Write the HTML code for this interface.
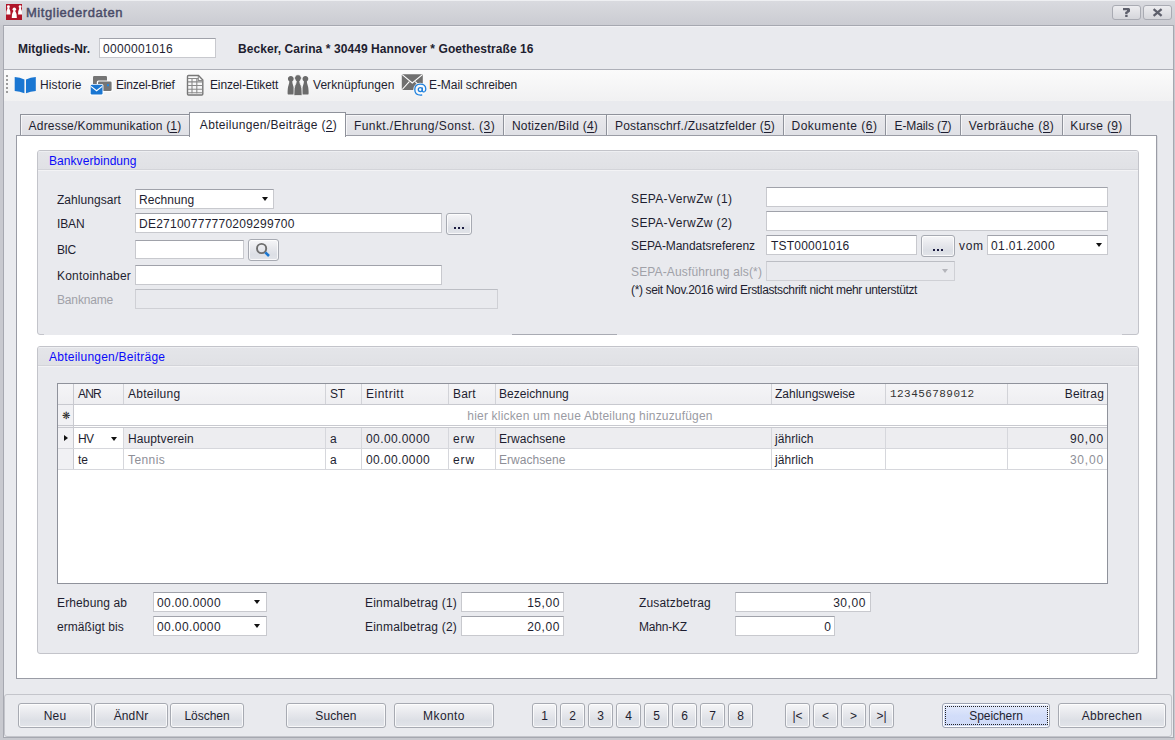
<!DOCTYPE html><html><head><meta charset="utf-8"><style>
html,body{margin:0;padding:0}
body{width:1175px;height:740px;overflow:hidden;position:relative;background:#c8c9cf;font-family:'Liberation Sans',sans-serif;font-size:12px;color:#1e1e30}
body>div,body>svg{position:absolute;box-sizing:content-box}
.t{white-space:nowrap;line-height:14px}
.btn{border:1px solid #a7aab2;border-radius:3px;background:linear-gradient(#f6f6f8 0%,#e9eaee 35%,#dcdfe5 72%,#e2e4e9 100%);box-shadow:inset 0 0 0 1px rgba(255,255,255,0.75)}
u{text-decoration:none;border-bottom:1px solid currentColor;display:inline-block;line-height:11px}
</style></head><body>
<div style="left:0px;top:0px;width:1175px;height:25px;background:linear-gradient(#eeeff2 0px,#eeeff2 1px,#d9dadf 1px,#cbccd2 25px)"></div>
<svg style="left:6px;top:4px" width="16" height="16" viewBox="0 0 16 16"><rect width="16" height="16" fill="#b0162a"/><g fill="#fff"><circle cx="2.4" cy="2.65" r="1.45"/><path d="M1.5 3.4999999999999996 L3.3 3.4999999999999996 Q3.2 4.8999999999999995 3.786 5.699999999999999 Q4.5 6.699999999999999 4.5 10.0 L4.5 10.6 L0.2999999999999998 10.6 L0.2999999999999998 10.0 Q0.2999999999999998 6.699999999999999 1.0139999999999998 5.699999999999999 Q1.5999999999999999 4.8999999999999995 1.5 3.4999999999999996 Z"/><circle cx="14.1" cy="2.65" r="1.45"/><path d="M13.2 3.4999999999999996 L15.0 3.4999999999999996 Q14.9 4.8999999999999995 15.42 5.699999999999999 Q16.1 6.699999999999999 16.1 10.0 L16.1 10.6 L12.1 10.6 L12.1 10.0 Q12.1 6.699999999999999 12.78 5.699999999999999 Q13.299999999999999 4.8999999999999995 13.2 3.4999999999999996 Z"/></g><g fill="#fff"><circle cx="8.3" cy="5.15" r="1.75"/><path d="M7.4 6.300000000000001 L9.200000000000001 6.300000000000001 Q9.100000000000001 7.7 9.950000000000001 8.5 Q10.8 9.5 10.8 13.3 L10.8 13.9 L5.800000000000001 13.9 L5.800000000000001 13.3 Q5.800000000000001 9.5 6.65 8.5 Q7.500000000000001 7.7 7.4 6.300000000000001 Z"/></g></svg>
<div class="t" style="left:26px;top:6px;font-size:13px;font-weight:normal;font-family:'Liberation Sans',sans-serif;color:#4a4c68;-webkit-text-stroke:0.45px #4a4c68;letter-spacing:0.536px;">Mitgliederdaten</div>
<div style="left:1112px;top:5px;width:27px;height:13px;border:1px solid #a9abb3;border-radius:3px;background:linear-gradient(#ededf0,#d5d6db)"></div>
<div style="left:1143px;top:5px;width:27px;height:13px;border:1px solid #a9abb3;border-radius:3px;background:linear-gradient(#ededf0,#d5d6db)"></div>
<svg style="left:1112px;top:5px" width="60" height="15" viewBox="1112 5 60 15"><g fill="#5d5f6b"><path d="M1123 8 H1129 L1130 9 V11.6 L1128.6 12.8 H1127.6 V14.2 H1125.2 V12 L1127 11 V10.2 H1123 Z"/><rect x="1125.2" y="15" width="2.4" height="2"/></g><path d="M1153.6 9.2 L1161.6 15.8 M1161.6 9.2 L1153.6 15.8" stroke="#5d5f6b" stroke-width="2.3"/></svg>
<div style="left:3px;top:25px;width:1171px;height:713px;background:#e9eaee;border:1px solid #a6a8b0;box-sizing:border-box"></div>
<div style="left:4px;top:26px;width:1168px;height:1px;background:#f2f2f5"></div>
<div style="left:4px;top:69px;width:1169px;height:1px;background:#aeb0b8"></div>
<div style="left:4px;top:70px;width:1169px;height:31px;background:linear-gradient(#fbfbfb,#f1f1f2)"></div>
<div style="left:6px;top:75px;width:2px;height:2px;background:#9c9c9c"></div>
<div style="left:6px;top:79px;width:2px;height:2px;background:#9c9c9c"></div>
<div style="left:6px;top:83px;width:2px;height:2px;background:#9c9c9c"></div>
<div style="left:6px;top:87px;width:2px;height:2px;background:#9c9c9c"></div>
<div style="left:6px;top:91px;width:2px;height:2px;background:#9c9c9c"></div>
<div class="t" style="left:18px;top:42px;font-size:12px;font-weight:bold;font-family:'Liberation Sans',sans-serif;color:#1e1e30;letter-spacing:0.015px;">Mitglieds-Nr.</div>
<div style="left:99px;top:38px;width:115px;height:18px;background:#fff;border:1px solid #c8c9ce;border-top-color:#a0a2aa;"></div>
<div class="t" style="left:103px;top:42px;font-size:12px;font-weight:normal;font-family:'Liberation Sans',sans-serif;color:#1e1e30;letter-spacing:0.339px;">0000001016</div>
<div class="t" style="left:238px;top:42px;font-size:12px;font-weight:bold;font-family:'Liberation Sans',sans-serif;color:#1e1e30;letter-spacing:0.07px;">Becker, Carina * 30449 Hannover * Goethestraße 16</div>
<svg style="left:14px;top:76px" width="23" height="18" viewBox="14 76 23 18"><g fill="#1976d2"><path d="M14.7 77 Q20 77.3 24.4 79.5 L24.4 93.2 Q20 91.5 14.7 91 Z"/><path d="M35.8 77 Q30.5 77.3 26 79.5 L26 93.2 Q30.5 91.5 35.8 91 Z"/></g></svg>
<div class="t" style="left:40px;top:78px;font-size:12px;font-weight:normal;font-family:'Liberation Sans',sans-serif;color:#1e1e30;letter-spacing:0.102px;">Historie</div>
<svg style="left:88px;top:74px" width="26" height="22" viewBox="88 74 26 22"><rect x="93" y="76" width="14" height="9" rx="1.2" fill="#757575"/><rect x="96.8" y="80.5" width="15.8" height="11.3" rx="1.5" fill="#fff"/><rect x="98" y="81.5" width="13.6" height="9.4" rx="1.2" fill="#757575"/><rect x="107" y="84.2" width="2" height="2" fill="#1e88e5"/><rect x="89.8" y="84" width="13.6" height="11.4" rx="1.5" fill="#fff"/><rect x="90.7" y="84.8" width="11.8" height="9.7" rx="1.2" fill="#1976d2"/><path d="M91 86.4 L96.6 90.8 L102.2 86.4" stroke="#fff" stroke-width="1.2" fill="none"/></svg>
<div class="t" style="left:116px;top:78px;font-size:12px;font-weight:normal;font-family:'Liberation Sans',sans-serif;color:#1e1e30;letter-spacing:-0.224px;">Einzel-Brief</div>
<svg style="left:186px;top:74px" width="19" height="23" viewBox="186 74 19 23"><path d="M188.5 75.5 L198.5 75.5 L202.8 80 L202.8 94 Q202.8 95 201.8 95 L188.5 95 Q187.5 95 187.5 94 L187.5 76.5 Q187.5 75.5 188.5 75.5 Z" fill="none" stroke="#777" stroke-width="1.4"/><path d="M188 78.5 H198 M188 81.9 H202.5 M188 85.5 H202.5 M188 89.2 H202.5 M188 92.8 H202.5 M192 78.5 V93.5 M196.8 78.5 V93.5 M198.3 76 V80.5 H202.5" fill="none" stroke="#8a8a8a" stroke-width="1.1"/></svg>
<div class="t" style="left:210px;top:78px;font-size:12px;font-weight:normal;font-family:'Liberation Sans',sans-serif;color:#1e1e30;letter-spacing:-0.133px;">Einzel-Etikett</div>
<svg style="left:284px;top:72px" width="28" height="26" viewBox="284 72 28 26"><g fill="#6b6b6b"><path d="M289.29 81.27 A2.9 2.9 0 1 1 292.31 81.27 Q292.16 83.27 293.20 85.77 Q294.00 87.77 294.00 93.40 Q294.00 94.60 292.80 94.60 L288.80 94.60 Q287.60 94.60 287.60 93.40 Q287.60 87.77 288.40 85.77 Q289.44 83.27 289.29 81.27 Z"/><path d="M303.89 81.27 A2.9 2.9 0 1 1 306.91 81.27 Q306.76 83.27 307.80 85.77 Q308.60 87.77 308.60 93.40 Q308.60 94.60 307.40 94.60 L303.40 94.60 Q302.20 94.60 302.20 93.40 Q302.20 87.77 303.00 85.77 Q304.04 83.27 303.89 81.27 Z"/></g><g fill="#6b6b6b" stroke="#f6f6f6" stroke-width="0.8"><path d="M296.23 80.99 A3.4 3.4 0 1 1 299.77 80.99 Q299.59 82.99 301.07 85.49 Q302.10 87.49 302.10 94.40 Q302.10 95.60 300.90 95.60 L295.10 95.60 Q293.90 95.60 293.90 94.40 Q293.90 87.49 294.93 85.49 Q296.41 82.99 296.23 80.99 Z"/></g></svg>
<div class="t" style="left:313px;top:78px;font-size:12px;font-weight:normal;font-family:'Liberation Sans',sans-serif;color:#1e1e30;letter-spacing:0.054px;">Verknüpfungen</div>
<svg style="left:400px;top:72px" width="30" height="26" viewBox="400 72 30 26"><rect x="401.8" y="74.2" width="21" height="15.7" rx="1" fill="#6f6f6f"/><path d="M402.2 74.6 L412.3 83 L422.4 74.6 M402.2 89.5 L409.3 81.6 M422.4 89.5 L415.3 81.6" stroke="#fff" stroke-width="1.1" fill="none"/><circle cx="420.1" cy="89.6" r="6.8" fill="#f8f8f8"/><path d="M424.4 91.8 Q425.8 90.8 425.8 89.2 Q425.8 84.2 420.2 84.2 Q414.8 84.2 414.8 89.6 Q414.8 95.2 420.6 95.2 L422.2 95" stroke="#1e80de" stroke-width="1.3" fill="none"/><circle cx="420.3" cy="89.6" r="2" stroke="#1e80de" stroke-width="1.3" fill="none"/><path d="M422.3 87.6 L422.3 90.6 Q422.5 92.2 424.4 91.8" stroke="#1e80de" stroke-width="1.3" fill="none"/></svg>
<div class="t" style="left:429px;top:78px;font-size:12px;font-weight:normal;font-family:'Liberation Sans',sans-serif;color:#1e1e30;letter-spacing:-0.072px;">E-Mail schreiben</div>
<div style="left:16px;top:135px;width:1139px;height:542px;background:#fff;border:1px solid #9a9ca5"></div>
<div style="left:1157px;top:136px;width:1px;height:543px;background:#d8d9de"></div>
<div style="left:20px;top:114px;width:168px;height:20px;border:1px solid #8f929b;border-bottom:none;background:linear-gradient(#e9e9ed,#dfe0e5);box-shadow:inset 1px 1px 0 #f6f6f8"></div>
<div class="t" style="left:20.5px;width:169px;text-align:center;top:119px;font-size:12px;font-weight:normal;font-family:'Liberation Sans',sans-serif;color:#1e1e30;letter-spacing:0.188px;">Adresse/Kommunikation (<u>1</u>)</div>
<div style="left:345px;top:114px;width:157px;height:20px;border:1px solid #8f929b;border-bottom:none;background:linear-gradient(#e9e9ed,#dfe0e5);box-shadow:inset 1px 1px 0 #f6f6f8"></div>
<div class="t" style="left:345.5px;width:158px;text-align:center;top:119px;font-size:12px;font-weight:normal;font-family:'Liberation Sans',sans-serif;color:#1e1e30;letter-spacing:0.433px;">Funkt./Ehrung/Sonst. (<u>3</u>)</div>
<div style="left:503px;top:114px;width:102px;height:20px;border:1px solid #8f929b;border-bottom:none;background:linear-gradient(#e9e9ed,#dfe0e5);box-shadow:inset 1px 1px 0 #f6f6f8"></div>
<div class="t" style="left:503.5px;width:103px;text-align:center;top:119px;font-size:12px;font-weight:normal;font-family:'Liberation Sans',sans-serif;color:#1e1e30;letter-spacing:0.263px;">Notizen/Bild (<u>4</u>)</div>
<div style="left:606px;top:114px;width:176px;height:20px;border:1px solid #8f929b;border-bottom:none;background:linear-gradient(#e9e9ed,#dfe0e5);box-shadow:inset 1px 1px 0 #f6f6f8"></div>
<div class="t" style="left:606.5px;width:177px;text-align:center;top:119px;font-size:12px;font-weight:normal;font-family:'Liberation Sans',sans-serif;color:#1e1e30;letter-spacing:0.204px;">Postanschrf./Zusatzfelder (<u>5</u>)</div>
<div style="left:783px;top:114px;width:101px;height:20px;border:1px solid #8f929b;border-bottom:none;background:linear-gradient(#e9e9ed,#dfe0e5);box-shadow:inset 1px 1px 0 #f6f6f8"></div>
<div class="t" style="left:783.5px;width:102px;text-align:center;top:119px;font-size:12px;font-weight:normal;font-family:'Liberation Sans',sans-serif;color:#1e1e30;letter-spacing:0.509px;">Dokumente (<u>6</u>)</div>
<div style="left:885px;top:114px;width:74px;height:20px;border:1px solid #8f929b;border-bottom:none;background:linear-gradient(#e9e9ed,#dfe0e5);box-shadow:inset 1px 1px 0 #f6f6f8"></div>
<div class="t" style="left:885.5px;width:75px;text-align:center;top:119px;font-size:12px;font-weight:normal;font-family:'Liberation Sans',sans-serif;color:#1e1e30;letter-spacing:-0.103px;">E-Mails (<u>7</u>)</div>
<div style="left:960px;top:114px;width:101px;height:20px;border:1px solid #8f929b;border-bottom:none;background:linear-gradient(#e9e9ed,#dfe0e5);box-shadow:inset 1px 1px 0 #f6f6f8"></div>
<div class="t" style="left:960.5px;width:102px;text-align:center;top:119px;font-size:12px;font-weight:normal;font-family:'Liberation Sans',sans-serif;color:#1e1e30;letter-spacing:0.43px;">Verbräuche (<u>8</u>)</div>
<div style="left:1062px;top:114px;width:67px;height:20px;border:1px solid #8f929b;border-bottom:none;background:linear-gradient(#e9e9ed,#dfe0e5);box-shadow:inset 1px 1px 0 #f6f6f8"></div>
<div class="t" style="left:1062.5px;width:68px;text-align:center;top:119px;font-size:12px;font-weight:normal;font-family:'Liberation Sans',sans-serif;color:#1e1e30;letter-spacing:0.328px;">Kurse (<u>9</u>)</div>
<div style="left:189px;top:112px;width:155px;height:24px;border:1px solid #8f929b;border-bottom:none;background:#fff"></div>
<div class="t" style="left:190.5px;width:156px;text-align:center;top:118px;font-size:12px;font-weight:normal;font-family:'Liberation Sans',sans-serif;color:#1e1e30;letter-spacing:0.329px;">Abteilungen/Beiträge (<u>2</u>)</div>
<div style="left:37px;top:150px;width:1100px;height:183px;border:1px solid #c3c4ca;border-radius:3px;background:#e9eaee"></div>
<div style="left:38px;top:151px;width:1100px;height:18px;border-radius:2px 2px 0 0;background:linear-gradient(#eeeff2 0px,#eeeff2 1px,#e4e5e9 1px,#e0e1e5 18px)"></div>
<div style="left:38px;top:169px;width:1100px;height:1px;background:#d3d4d9"></div>
<div style="left:38px;top:170px;width:1100px;height:1px;background:#f3f3f5"></div>
<div class="t" style="left:49px;top:154px;font-size:12px;font-weight:normal;font-family:'Liberation Sans',sans-serif;color:#0a0afa;letter-spacing:0.059px;">Bankverbindung</div>
<div style="left:44px;top:334px;width:468px;height:1px;background:#e9eaee"></div>
<div style="left:617px;top:334px;width:505px;height:1px;background:#e9eaee"></div>
<div style="left:512px;top:334px;width:105px;height:1px;background:#a9abb3"></div>
<div style="left:37px;top:346px;width:1100px;height:306px;border:1px solid #c3c4ca;border-radius:3px;background:#e9eaee"></div>
<div style="left:38px;top:347px;width:1100px;height:18px;border-radius:2px 2px 0 0;background:linear-gradient(#eeeff2 0px,#eeeff2 1px,#e4e5e9 1px,#e0e1e5 18px)"></div>
<div style="left:38px;top:365px;width:1100px;height:1px;background:#d3d4d9"></div>
<div style="left:38px;top:366px;width:1100px;height:1px;background:#f3f3f5"></div>
<div class="t" style="left:49px;top:350px;font-size:12px;font-weight:normal;font-family:'Liberation Sans',sans-serif;color:#0a0afa;letter-spacing:0.241px;">Abteilungen/Beiträge</div>
<div class="t" style="left:57px;top:193px;font-size:12px;font-weight:normal;font-family:'Liberation Sans',sans-serif;color:#1e1e30;letter-spacing:0.042px;">Zahlungsart</div>
<div style="left:135px;top:189px;width:137px;height:18px;background:#fff;border:1px solid #c8c9ce;border-top-color:#a0a2aa;"></div>
<div class="t" style="left:139px;top:193px;font-size:12px;font-weight:normal;font-family:'Liberation Sans',sans-serif;color:#1e1e30;letter-spacing:0.069px;">Rechnung</div>
<div style="left:262px;top:197px;width:0;height:0;border-left:3.5px solid transparent;border-right:3.5px solid transparent;border-top:4px solid #111"></div>
<div class="t" style="left:57px;top:217px;font-size:12px;font-weight:normal;font-family:'Liberation Sans',sans-serif;color:#1e1e30;letter-spacing:-0.139px;">IBAN</div>
<div style="left:135px;top:213px;width:305px;height:18px;background:#fff;border:1px solid #c8c9ce;border-top-color:#a0a2aa;"></div>
<div class="t" style="left:139px;top:217px;font-size:12px;font-weight:normal;font-family:'Liberation Sans',sans-serif;color:#1e1e30;letter-spacing:0.25px;">DE27100777770209299700</div>
<div class="btn" style="left:446px;top:213px;width:24px;height:20px;"></div>
<div style="left:454px;top:227px;width:2px;height:2px;background:#1a1a40"></div>
<div style="left:458px;top:227px;width:2px;height:2px;background:#1a1a40"></div>
<div style="left:462px;top:227px;width:2px;height:2px;background:#1a1a40"></div>
<div class="t" style="left:57px;top:243px;font-size:12px;font-weight:normal;font-family:'Liberation Sans',sans-serif;color:#1e1e30;letter-spacing:-0.458px;">BIC</div>
<div style="left:135px;top:240px;width:107px;height:17px;background:#fff;border:1px solid #c8c9ce;border-top-color:#a0a2aa;"></div>
<div class="btn" style="left:248px;top:239px;width:29px;height:20px;"></div>
<svg style="left:254px;top:241px" width="20" height="18" viewBox="254 241 20 18"><circle cx="261.6" cy="248.5" r="4.6" stroke="#6e6e6e" stroke-width="1.9" fill="none"/><path d="M265.3 252.3 L269 256" stroke="#1976d2" stroke-width="2.6"/></svg>
<div class="t" style="left:57px;top:269px;font-size:12px;font-weight:normal;font-family:'Liberation Sans',sans-serif;color:#1e1e30;letter-spacing:0.219px;">Kontoinhaber</div>
<div style="left:135px;top:265px;width:305px;height:18px;background:#fff;border:1px solid #c8c9ce;border-top-color:#a0a2aa;"></div>
<div class="t" style="left:57px;top:293px;font-size:12px;font-weight:normal;font-family:'Liberation Sans',sans-serif;color:#a0a1a8;letter-spacing:-0.154px;">Bankname</div>
<div style="left:135px;top:289px;width:361px;height:18px;background:#e9eaee;border:1px solid #cfd0d5;border-top-color:#bcbec4;"></div>
<div class="t" style="left:631px;top:192px;font-size:12px;font-weight:normal;font-family:'Liberation Sans',sans-serif;color:#1e1e30;letter-spacing:0.372px;">SEPA-VerwZw (1)</div>
<div style="left:766px;top:187px;width:340px;height:18px;background:#fff;border:1px solid #c8c9ce;border-top-color:#a0a2aa;"></div>
<div class="t" style="left:631px;top:216px;font-size:12px;font-weight:normal;font-family:'Liberation Sans',sans-serif;color:#1e1e30;letter-spacing:0.372px;">SEPA-VerwZw (2)</div>
<div style="left:766px;top:211px;width:340px;height:18px;background:#fff;border:1px solid #c8c9ce;border-top-color:#a0a2aa;"></div>
<div class="t" style="left:631px;top:239px;font-size:12px;font-weight:normal;font-family:'Liberation Sans',sans-serif;color:#1e1e30;letter-spacing:-0.062px;">SEPA-Mandatsreferenz</div>
<div style="left:766px;top:235px;width:149px;height:18px;background:#fff;border:1px solid #c8c9ce;border-top-color:#a0a2aa;"></div>
<div class="t" style="left:771px;top:239px;font-size:12px;font-weight:normal;font-family:'Liberation Sans',sans-serif;color:#1e1e30;letter-spacing:0.214px;">TST00001016</div>
<div class="btn" style="left:921px;top:235px;width:32px;height:20px;"></div>
<div style="left:933px;top:249px;width:2px;height:2px;background:#1a1a40"></div>
<div style="left:937px;top:249px;width:2px;height:2px;background:#1a1a40"></div>
<div style="left:941px;top:249px;width:2px;height:2px;background:#1a1a40"></div>
<div class="t" style="left:959px;top:239px;font-size:12px;font-weight:normal;font-family:'Liberation Sans',sans-serif;color:#1e1e30;letter-spacing:0.664px;">vom</div>
<div style="left:987px;top:235px;width:119px;height:18px;background:#fff;border:1px solid #c8c9ce;border-top-color:#a0a2aa;"></div>
<div class="t" style="left:991px;top:239px;font-size:12px;font-weight:normal;font-family:'Liberation Sans',sans-serif;color:#1e1e30;letter-spacing:0.393px;">01.01.2000</div>
<div style="left:1096px;top:243px;width:0;height:0;border-left:3.5px solid transparent;border-right:3.5px solid transparent;border-top:4px solid #111"></div>
<div class="t" style="left:631px;top:265px;font-size:12px;font-weight:normal;font-family:'Liberation Sans',sans-serif;color:#a0a1a8;letter-spacing:0.146px;">SEPA-Ausführung als(*)</div>
<div style="left:766px;top:261px;width:187px;height:18px;background:#e9eaee;border:1px solid #cfd0d5;border-top-color:#bcbec4;"></div>
<div style="left:942px;top:269px;width:0;height:0;border-left:3.5px solid transparent;border-right:3.5px solid transparent;border-top:4px solid #b4b5bb"></div>
<div class="t" style="left:631px;top:283px;font-size:12px;font-weight:normal;font-family:'Liberation Sans',sans-serif;color:#1e1e30;letter-spacing:-0.358px;">(*) seit Nov.2016 wird Erstlastschrift nicht mehr unterstützt</div>
<div style="left:57px;top:383px;width:1049px;height:199px;border:1px solid #8f929b;background:#fff"></div>
<div style="left:58px;top:384px;width:1049px;height:20px;background:linear-gradient(#f5f5f7,#eeeef1)"></div>
<div style="left:58px;top:404px;width:1049px;height:1px;background:#c8c9cf"></div>
<div style="left:58px;top:405px;width:15px;height:64px;background:#f1f1f4"></div>
<div style="left:73px;top:384px;width:1px;height:85px;background:#c8c9cf"></div>
<div style="left:124px;top:428px;width:983px;height:20px;background:#ededf0"></div>
<div style="left:123px;top:384px;width:1px;height:20px;background:#d2d3d8"></div>
<div style="left:123px;top:428px;width:1px;height:41px;background:#d6d7dc"></div>
<div style="left:325px;top:384px;width:1px;height:20px;background:#d2d3d8"></div>
<div style="left:325px;top:428px;width:1px;height:41px;background:#d6d7dc"></div>
<div style="left:361px;top:384px;width:1px;height:20px;background:#d2d3d8"></div>
<div style="left:361px;top:428px;width:1px;height:41px;background:#d6d7dc"></div>
<div style="left:448px;top:384px;width:1px;height:20px;background:#d2d3d8"></div>
<div style="left:448px;top:428px;width:1px;height:41px;background:#d6d7dc"></div>
<div style="left:495px;top:384px;width:1px;height:20px;background:#d2d3d8"></div>
<div style="left:495px;top:428px;width:1px;height:41px;background:#d6d7dc"></div>
<div style="left:771px;top:384px;width:1px;height:20px;background:#d2d3d8"></div>
<div style="left:771px;top:428px;width:1px;height:41px;background:#d6d7dc"></div>
<div style="left:885px;top:384px;width:1px;height:20px;background:#d2d3d8"></div>
<div style="left:885px;top:428px;width:1px;height:41px;background:#d6d7dc"></div>
<div style="left:1007px;top:384px;width:1px;height:20px;background:#d2d3d8"></div>
<div style="left:1007px;top:428px;width:1px;height:41px;background:#d6d7dc"></div>
<div style="left:58px;top:425px;width:1049px;height:1px;background:#c8c9cf"></div>
<div style="left:58px;top:427px;width:1049px;height:1px;background:#c8c9cf"></div>
<div style="left:58px;top:448px;width:1049px;height:1px;background:#d6d7dc"></div>
<div style="left:58px;top:469px;width:1049px;height:1px;background:#d6d7dc"></div>
<div class="t" style="left:78px;top:387px;font-size:12px;font-weight:normal;font-family:'Liberation Sans',sans-serif;color:#1e1e30;letter-spacing:-0.822px;">ANR</div>
<div class="t" style="left:128px;top:387px;font-size:12px;font-weight:normal;font-family:'Liberation Sans',sans-serif;color:#1e1e30;letter-spacing:0.257px;">Abteilung</div>
<div class="t" style="left:330px;top:387px;font-size:12px;font-weight:normal;font-family:'Liberation Sans',sans-serif;color:#1e1e30;letter-spacing:-0.344px;">ST</div>
<div class="t" style="left:366px;top:387px;font-size:12px;font-weight:normal;font-family:'Liberation Sans',sans-serif;color:#1e1e30;letter-spacing:0.498px;">Eintritt</div>
<div class="t" style="left:453px;top:387px;font-size:12px;font-weight:normal;font-family:'Liberation Sans',sans-serif;color:#1e1e30;letter-spacing:0.161px;">Bart</div>
<div class="t" style="left:499px;top:387px;font-size:12px;font-weight:normal;font-family:'Liberation Sans',sans-serif;color:#1e1e30;letter-spacing:0.041px;">Bezeichnung</div>
<div class="t" style="left:775px;top:387px;font-size:12px;font-weight:normal;font-family:'Liberation Sans',sans-serif;color:#1e1e30;letter-spacing:-0.004px;">Zahlungsweise</div>
<div class="t" style="left:890px;top:387px;font-size:11px;font-weight:normal;font-family:'Liberation Mono',monospace;color:#333;letter-spacing:0.444px;">123456789012</div>
<div class="t" style="right:71px;top:387px;font-size:12px;font-weight:normal;font-family:'Liberation Sans',sans-serif;color:#1e1e30;letter-spacing:0.178px;">Beitrag</div>
<div class="t" style="left:58px;top:409px;width:15px;text-align:center;font-size:10px;color:#222">&#x274B;</div>
<div class="t" style="left:390.0px;width:400px;text-align:center;top:409px;font-size:12px;font-weight:normal;font-family:'Liberation Sans',sans-serif;color:#9a9ba3;letter-spacing:0.181px;">hier klicken um neue Abteilung hinzuzufügen</div>
<div style="left:64px;top:435px;width:0;height:0;border-top:3.5px solid transparent;border-bottom:3.5px solid transparent;border-left:4px solid #111"></div>
<div class="t" style="left:78px;top:432px;font-size:12px;font-weight:normal;font-family:'Liberation Sans',sans-serif;color:#1e1e30;letter-spacing:-0.572px;">HV</div>
<div style="left:111px;top:437px;width:0;height:0;border-left:3.5px solid transparent;border-right:3.5px solid transparent;border-top:4px solid #111"></div>
<div class="t" style="left:128px;top:432px;font-size:12px;font-weight:normal;font-family:'Liberation Sans',sans-serif;color:#1e1e30;letter-spacing:0.108px;">Hauptverein</div>
<div class="t" style="left:330px;top:432px;font-size:12px;font-weight:normal;font-family:'Liberation Sans',sans-serif;color:#1e1e30;">a</div>
<div class="t" style="left:366px;top:432px;font-size:12px;font-weight:normal;font-family:'Liberation Sans',sans-serif;color:#1e1e30;letter-spacing:0.404px;">00.00.0000</div>
<div class="t" style="left:453px;top:432px;font-size:12px;font-weight:normal;font-family:'Liberation Sans',sans-serif;color:#1e1e30;letter-spacing:0.928px;">erw</div>
<div class="t" style="left:499px;top:432px;font-size:12px;font-weight:normal;font-family:'Liberation Sans',sans-serif;color:#1e1e30;letter-spacing:0.039px;">Erwachsene</div>
<div class="t" style="left:775px;top:432px;font-size:12px;font-weight:normal;font-family:'Liberation Sans',sans-serif;color:#1e1e30;letter-spacing:0.069px;">jährlich</div>
<div class="t" style="right:71px;top:432px;font-size:12px;font-weight:normal;font-family:'Liberation Sans',sans-serif;color:#1e1e30;letter-spacing:0.817px;">90,00</div>
<div class="t" style="left:78px;top:453px;font-size:12px;font-weight:normal;font-family:'Liberation Sans',sans-serif;color:#1e1e30;">te</div>
<div class="t" style="left:128px;top:453px;font-size:12px;font-weight:normal;font-family:'Liberation Sans',sans-serif;color:#8e8f97;letter-spacing:0.422px;">Tennis</div>
<div class="t" style="left:330px;top:453px;font-size:12px;font-weight:normal;font-family:'Liberation Sans',sans-serif;color:#1e1e30;">a</div>
<div class="t" style="left:366px;top:453px;font-size:12px;font-weight:normal;font-family:'Liberation Sans',sans-serif;color:#1e1e30;letter-spacing:0.404px;">00.00.0000</div>
<div class="t" style="left:453px;top:453px;font-size:12px;font-weight:normal;font-family:'Liberation Sans',sans-serif;color:#1e1e30;letter-spacing:0.928px;">erw</div>
<div class="t" style="left:499px;top:453px;font-size:12px;font-weight:normal;font-family:'Liberation Sans',sans-serif;color:#8e8f97;letter-spacing:0.039px;">Erwachsene</div>
<div class="t" style="left:775px;top:453px;font-size:12px;font-weight:normal;font-family:'Liberation Sans',sans-serif;color:#1e1e30;letter-spacing:0.069px;">jährlich</div>
<div class="t" style="right:71px;top:453px;font-size:12px;font-weight:normal;font-family:'Liberation Sans',sans-serif;color:#8e8f97;letter-spacing:0.817px;">30,00</div>
<div class="t" style="left:57px;top:596px;font-size:12px;font-weight:normal;font-family:'Liberation Sans',sans-serif;color:#1e1e30;letter-spacing:0.127px;">Erhebung ab</div>
<div style="left:153px;top:592px;width:112px;height:18px;background:#fff;border:1px solid #c8c9ce;border-top-color:#a0a2aa;"></div>
<div class="t" style="left:157px;top:596px;font-size:12px;font-weight:normal;font-family:'Liberation Sans',sans-serif;color:#1e1e30;letter-spacing:0.393px;">00.00.0000</div>
<div style="left:254px;top:600px;width:0;height:0;border-left:3.5px solid transparent;border-right:3.5px solid transparent;border-top:4px solid #111"></div>
<div class="t" style="left:57px;top:620px;font-size:12px;font-weight:normal;font-family:'Liberation Sans',sans-serif;color:#1e1e30;letter-spacing:0.061px;">ermäßigt bis</div>
<div style="left:153px;top:616px;width:112px;height:18px;background:#fff;border:1px solid #c8c9ce;border-top-color:#a0a2aa;"></div>
<div class="t" style="left:157px;top:620px;font-size:12px;font-weight:normal;font-family:'Liberation Sans',sans-serif;color:#1e1e30;letter-spacing:0.393px;">00.00.0000</div>
<div style="left:254px;top:624px;width:0;height:0;border-left:3.5px solid transparent;border-right:3.5px solid transparent;border-top:4px solid #111"></div>
<div class="t" style="left:365px;top:596px;font-size:12px;font-weight:normal;font-family:'Liberation Sans',sans-serif;color:#1e1e30;letter-spacing:0.205px;">Einmalbetrag (1)</div>
<div style="left:461px;top:592px;width:101px;height:18px;background:#fff;border:1px solid #c8c9ce;border-top-color:#a0a2aa;"></div>
<div class="t" style="right:615px;top:596px;font-size:12px;font-weight:normal;font-family:'Liberation Sans',sans-serif;color:#1e1e30;letter-spacing:0.567px;">15,00</div>
<div class="t" style="left:365px;top:620px;font-size:12px;font-weight:normal;font-family:'Liberation Sans',sans-serif;color:#1e1e30;letter-spacing:0.205px;">Einmalbetrag (2)</div>
<div style="left:461px;top:616px;width:101px;height:18px;background:#fff;border:1px solid #c8c9ce;border-top-color:#a0a2aa;"></div>
<div class="t" style="right:615px;top:620px;font-size:12px;font-weight:normal;font-family:'Liberation Sans',sans-serif;color:#1e1e30;letter-spacing:0.567px;">20,00</div>
<div class="t" style="left:639px;top:596px;font-size:12px;font-weight:normal;font-family:'Liberation Sans',sans-serif;color:#1e1e30;letter-spacing:0.159px;">Zusatzbetrag</div>
<div style="left:735px;top:592px;width:134px;height:18px;background:#fff;border:1px solid #c8c9ce;border-top-color:#a0a2aa;"></div>
<div class="t" style="right:309px;top:596px;font-size:12px;font-weight:normal;font-family:'Liberation Sans',sans-serif;color:#1e1e30;letter-spacing:0.567px;">30,00</div>
<div class="t" style="left:639px;top:620px;font-size:12px;font-weight:normal;font-family:'Liberation Sans',sans-serif;color:#1e1e30;letter-spacing:-0.21px;">Mahn-KZ</div>
<div style="left:735px;top:616px;width:98px;height:18px;background:#fff;border:1px solid #c8c9ce;border-top-color:#a0a2aa;"></div>
<div class="t" style="right:344px;top:620px;font-size:12px;font-weight:normal;font-family:'Liberation Sans',sans-serif;color:#1e1e30;">0</div>
<div style="left:4px;top:694px;width:1166px;height:41px;border:1px solid #c4c5cb;border-radius:3px;background:#e9eaee"></div>
<div class="btn" style="left:18px;top:703px;width:72px;height:23px;"></div>
<div class="t" style="left:18.0px;width:74px;text-align:center;top:709px;font-size:12px;font-weight:normal;font-family:'Liberation Sans',sans-serif;color:#1e1e30;letter-spacing:0.242px;">Neu</div>
<div class="btn" style="left:94px;top:703px;width:72px;height:23px;"></div>
<div class="t" style="left:94.0px;width:74px;text-align:center;top:709px;font-size:12px;font-weight:normal;font-family:'Liberation Sans',sans-serif;color:#1e1e30;letter-spacing:0.096px;">ÄndNr</div>
<div class="btn" style="left:170px;top:703px;width:72px;height:23px;"></div>
<div class="t" style="left:170.0px;width:74px;text-align:center;top:709px;font-size:12px;font-weight:normal;font-family:'Liberation Sans',sans-serif;color:#1e1e30;letter-spacing:-0.029px;">Löschen</div>
<div class="btn" style="left:286px;top:703px;width:98px;height:23px;"></div>
<div class="t" style="left:286.0px;width:100px;text-align:center;top:709px;font-size:12px;font-weight:normal;font-family:'Liberation Sans',sans-serif;color:#1e1e30;letter-spacing:0.099px;">Suchen</div>
<div class="btn" style="left:394px;top:703px;width:98px;height:23px;"></div>
<div class="t" style="left:394.0px;width:100px;text-align:center;top:709px;font-size:12px;font-weight:normal;font-family:'Liberation Sans',sans-serif;color:#1e1e30;letter-spacing:0.428px;">Mkonto</div>
<div class="btn" style="left:532px;top:703px;width:23px;height:23px;"></div>
<div class="t" style="left:532.0px;width:25px;text-align:center;top:709px;font-size:12px;font-weight:normal;font-family:'Liberation Sans',sans-serif;color:#1e1e30;">1</div>
<div class="btn" style="left:560px;top:703px;width:23px;height:23px;"></div>
<div class="t" style="left:560.0px;width:25px;text-align:center;top:709px;font-size:12px;font-weight:normal;font-family:'Liberation Sans',sans-serif;color:#1e1e30;">2</div>
<div class="btn" style="left:588px;top:703px;width:23px;height:23px;"></div>
<div class="t" style="left:588.0px;width:25px;text-align:center;top:709px;font-size:12px;font-weight:normal;font-family:'Liberation Sans',sans-serif;color:#1e1e30;">3</div>
<div class="btn" style="left:616px;top:703px;width:23px;height:23px;"></div>
<div class="t" style="left:616.0px;width:25px;text-align:center;top:709px;font-size:12px;font-weight:normal;font-family:'Liberation Sans',sans-serif;color:#1e1e30;">4</div>
<div class="btn" style="left:644px;top:703px;width:23px;height:23px;"></div>
<div class="t" style="left:644.0px;width:25px;text-align:center;top:709px;font-size:12px;font-weight:normal;font-family:'Liberation Sans',sans-serif;color:#1e1e30;">5</div>
<div class="btn" style="left:672px;top:703px;width:23px;height:23px;"></div>
<div class="t" style="left:672.0px;width:25px;text-align:center;top:709px;font-size:12px;font-weight:normal;font-family:'Liberation Sans',sans-serif;color:#1e1e30;">6</div>
<div class="btn" style="left:700px;top:703px;width:23px;height:23px;"></div>
<div class="t" style="left:700.0px;width:25px;text-align:center;top:709px;font-size:12px;font-weight:normal;font-family:'Liberation Sans',sans-serif;color:#1e1e30;">7</div>
<div class="btn" style="left:728px;top:703px;width:23px;height:23px;"></div>
<div class="t" style="left:728.0px;width:25px;text-align:center;top:709px;font-size:12px;font-weight:normal;font-family:'Liberation Sans',sans-serif;color:#1e1e30;">8</div>
<div class="btn" style="left:785px;top:703px;width:23px;height:23px;"></div>
<div class="t" style="left:785.0px;width:25px;text-align:center;top:709px;font-size:12px;font-weight:normal;font-family:'Liberation Sans',sans-serif;color:#1e1e30;">|&lt;</div>
<div class="btn" style="left:813px;top:703px;width:23px;height:23px;"></div>
<div class="t" style="left:813.0px;width:25px;text-align:center;top:709px;font-size:12px;font-weight:normal;font-family:'Liberation Sans',sans-serif;color:#1e1e30;">&lt;</div>
<div class="btn" style="left:841px;top:703px;width:23px;height:23px;"></div>
<div class="t" style="left:841.0px;width:25px;text-align:center;top:709px;font-size:12px;font-weight:normal;font-family:'Liberation Sans',sans-serif;color:#1e1e30;">&gt;</div>
<div class="btn" style="left:869px;top:703px;width:23px;height:23px;"></div>
<div class="t" style="left:869.0px;width:25px;text-align:center;top:709px;font-size:12px;font-weight:normal;font-family:'Liberation Sans',sans-serif;color:#1e1e30;">&gt;|</div>
<div class="btn" style="left:942px;top:703px;width:106px;height:23px;background:linear-gradient(#e6ecfc,#d2ddf9 50%,#cfdaf8);border-color:#9da3b3;box-shadow:inset 0 0 0 1px #fff"></div>
<div style="left:945px;top:706px;width:101px;height:17px;border:1px dotted #222"></div>
<div class="t" style="left:942.0px;width:108px;text-align:center;top:709px;font-size:12px;font-weight:normal;font-family:'Liberation Sans',sans-serif;color:#1e1e30;letter-spacing:-0.056px;">Speichern</div>
<div class="btn" style="left:1058px;top:703px;width:106px;height:23px;"></div>
<div class="t" style="left:1058.0px;width:108px;text-align:center;top:709px;font-size:12px;font-weight:normal;font-family:'Liberation Sans',sans-serif;color:#1e1e30;letter-spacing:0.257px;">Abbrechen</div>
</body></html>
